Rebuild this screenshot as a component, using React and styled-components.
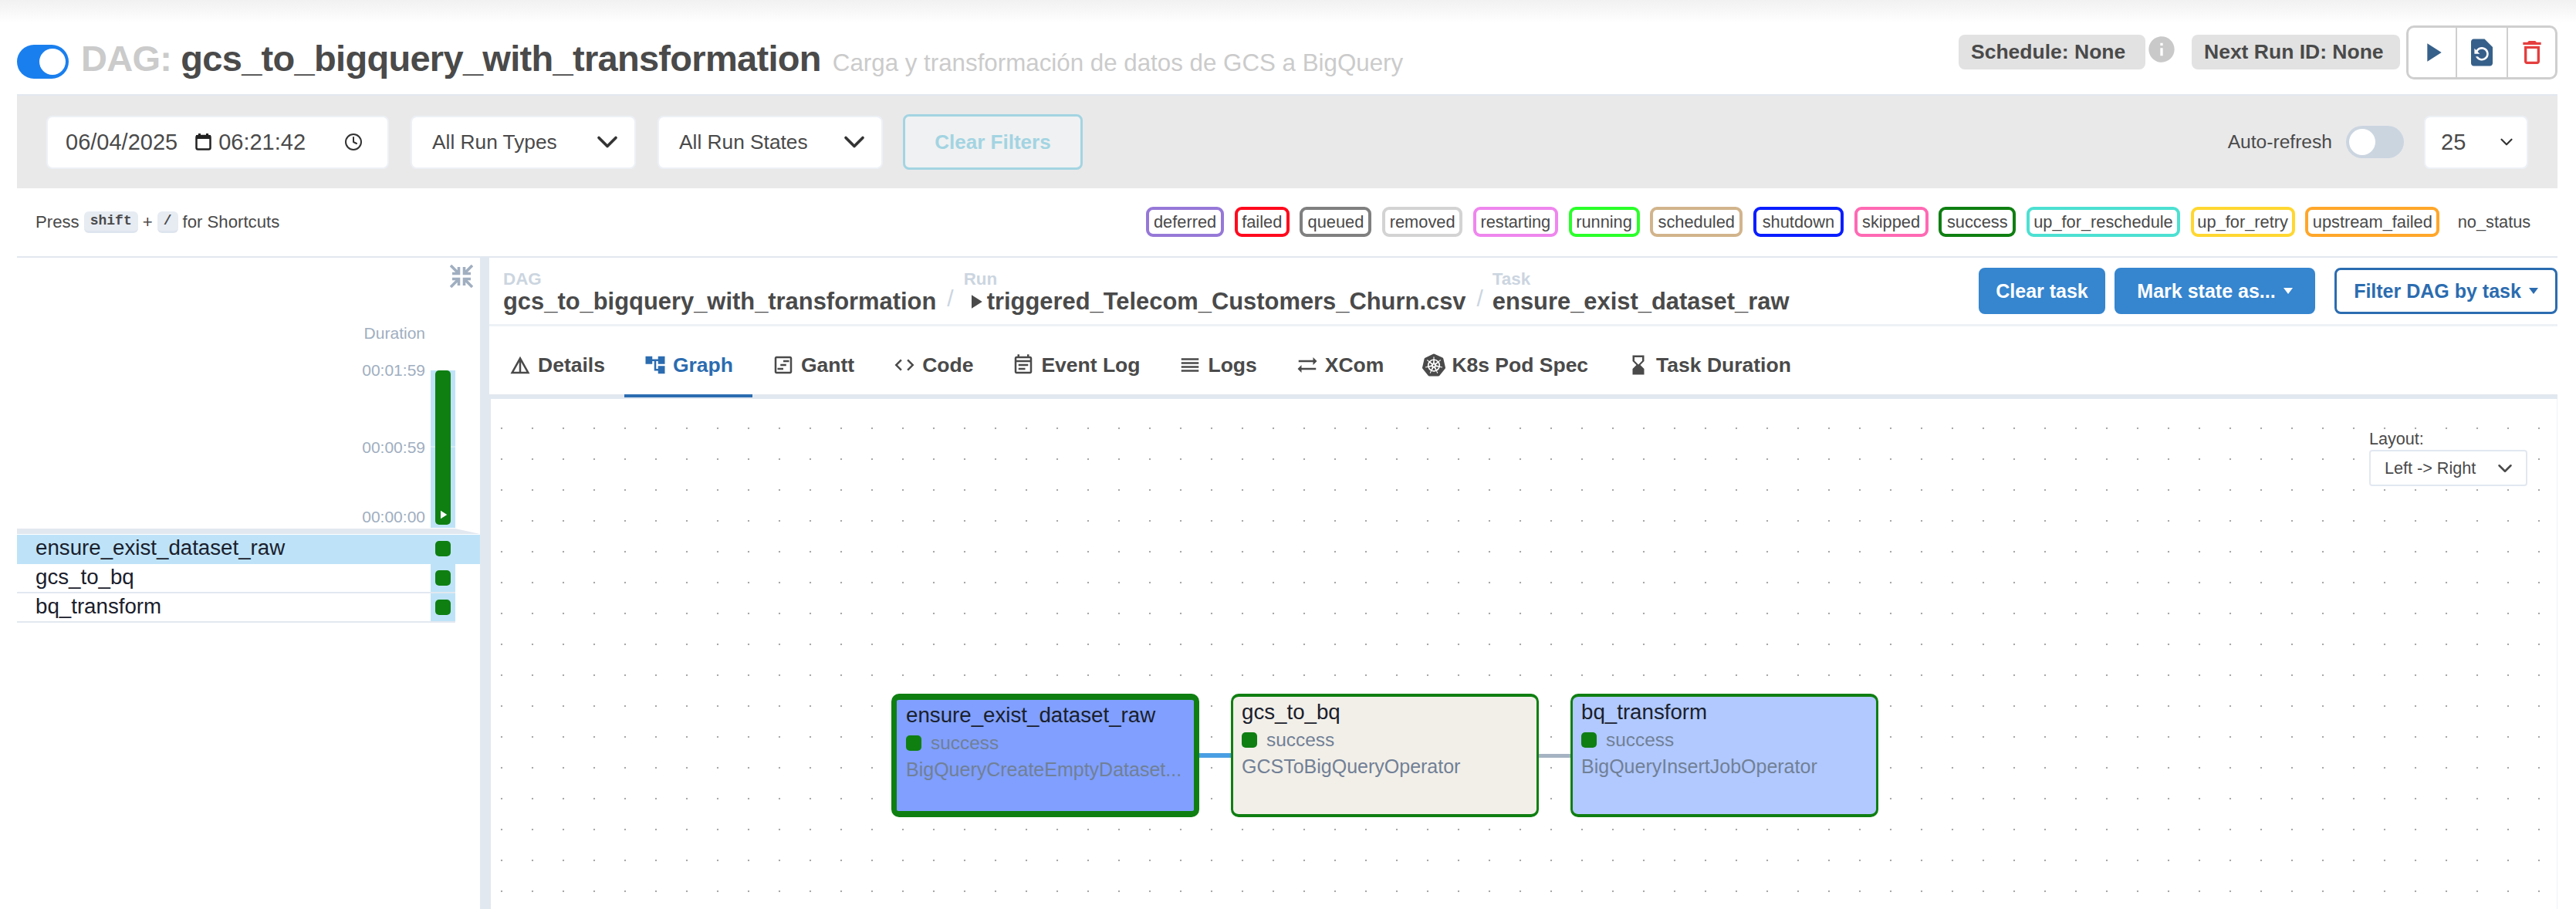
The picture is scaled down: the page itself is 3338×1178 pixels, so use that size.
import React from "react";
import styled, { createGlobalStyle } from "styled-components";
import {
  MdAccountTree,
  MdCode,
  MdDetails,
  MdHourglassBottom,
  MdInfo,
  MdOutlineDelete,
  MdOutlineEventNote,
  MdOutlineViewTimeline,
  MdPlayArrow,
  MdReorder,
  MdRestorePage,
  MdSyncAlt,
} from "react-icons/md";
import { SiKubernetes } from "react-icons/si";
import { FiChevronDown, FiClock } from "react-icons/fi";

const GlobalStyle = createGlobalStyle`
  html, body {
    margin: 0;
    height: 1178px;
    overflow: hidden;
    background: #fff;
    font-family: "Liberation Sans", Arial, sans-serif;
    color: #4a4a4a;
  }
`;

const Page = styled.div`
  height: 1178px;
  box-sizing: border-box;
  padding: 33px 24px 0 22px;
  display: flex;
  flex-direction: column;
  background: linear-gradient(#f1f1f1, #fff 30px);
`;

/* header */
const Header = styled.header`
  height: 70px;
  display: flex;
  align-items: flex-start;
  justify-content: space-between;
`;

const TitleGroup = styled.div`
  display: flex;
  align-items: center;
  height: 70px;
`;

const Switch = styled.div`
  box-sizing: border-box;
  flex: none;
  display: flex;
  align-items: center;
  justify-content: ${(p) => (p.$on ? "flex-end" : "flex-start")};
  width: ${(p) => (p.$on ? "67px" : "75px")};
  height: ${(p) => (p.$on ? "44px" : "42px")};
  margin-top: ${(p) => (p.$on ? "24px" : "0")};
  padding: 0 4px;
  border-radius: 22px;
  background: ${(p) => (p.$on ? "#1a7fee" : "#cbd5e0")};
  span {
    width: 34px;
    height: 34px;
    border-radius: 50%;
    background: #fff;
  }
`;

const Title = styled.h1`
  margin: 15px 0 0 16px;
  font-size: 47px;
  line-height: 56px;
  font-weight: 700;
  letter-spacing: -0.7px;
  white-space: nowrap;
  span {
    color: #cbcbcb;
    margin-right: 12px;
  }
`;

const Description = styled.span`
  margin: 27px 0 0 15px;
  font-size: 31.3px;
  color: #cbcbcb;
  white-space: nowrap;
`;

const HeaderRight = styled.div`
  display: flex;
  align-items: flex-start;
`;

const Badge = styled.div`
  box-sizing: border-box;
  width: ${(p) => p.$w}px;
  height: 45px;
  margin-top: 12px;
  padding-left: 16px;
  display: flex;
  align-items: center;
  border-radius: 8px;
  background: #e2e2e2;
  font-size: 26.5px;
  font-weight: 700;
  white-space: nowrap;
`;

const InfoMark = styled.div`
  width: 60px;
  height: 70px;
  display: flex;
  padding: 11px 0 0 1px;
  box-sizing: border-box;
  color: #c9c9c9;
  font-size: 40px;
`;

const ActionGroup = styled.div`
  display: flex;
  height: 70px;
  box-sizing: border-box;
  margin-left: 8px;
  border: 3px solid #cfcfcf;
  border-radius: 10px;
`;

const ActionButton = styled.div`
  display: flex;
  align-items: center;
  justify-content: center;
  width: ${(p) => p.$w}px;
  font-size: ${(p) => p.$size || 38}px;
  color: ${(p) => p.$color};
  & + & {
    border-left: 2px solid #cfcfcf;
  }
`;

/* filter bar */
const FilterBar = styled.section`
  margin-top: 19px;
  height: 122px;
  box-sizing: border-box;
  border-top: 2px solid #e2e8f0;
  background: #e9e9ea;
  display: flex;
  align-items: center;
  padding: 0 38px;
  gap: 28px;
`;

const Control = styled.div`
  box-sizing: border-box;
  width: ${(p) => p.$w}px;
  height: 69px;
  padding: 0 ${(p) => p.$pr || 28}px 0 ${(p) => p.$pl || 26}px;
  display: flex;
  align-items: center;
  justify-content: space-between;
  border: 2px solid #edf1f6;
  border-radius: 8px;
  background: #fff;
  font-size: 26.3px;
  white-space: nowrap;
  svg {
    flex: none;
    color: #333;
  }
`;

const DateControl = styled(Control)`
  justify-content: flex-start;
`;

const DateText = styled.span`
  font-size: 29px;
  margin-left: ${(p) => p.$ml || 0}px;
`;

const CalendarGlyph = styled.svg`
  width: 21px;
  height: 22px;
  margin-left: 23px;
`;

const ClockGlyph = styled(FiClock)`
  margin-left: auto;
`;

const ClearFilters = styled.div`
  box-sizing: border-box;
  width: 233px;
  height: 72px;
  display: flex;
  align-items: center;
  justify-content: center;
  margin-left: -2px;
  border: 3px solid #a3d4e2;
  border-radius: 8px;
  background: #f0f1f2;
  color: #a3d4e2;
  font-size: 26px;
  font-weight: 700;
`;

const RefreshGroup = styled.div`
  margin-left: auto;
  display: flex;
  align-items: center;
  gap: 18px;
  font-size: 24.6px;
`;

const PageSize = styled(Control)`
  margin-left: 8px;
  font-size: 29px;
`;

/* legend row */
const LegendRow = styled.div`
  height: 88px;
  flex: none;
  box-sizing: border-box;
  padding: 24px 25px 0 24px;
  display: flex;
  align-items: flex-start;
  justify-content: space-between;
`;

const Shortcuts = styled.div`
  display: flex;
  align-items: center;
  gap: 6px;
  height: 39px;
  font-size: 22.2px;
  kbd {
    font-family: "Liberation Mono", monospace;
    font-weight: 700;
    font-size: 18px;
    padding: 0 8px;
    height: 25px;
    line-height: 24px;
    border-radius: 6px;
    background: #e7ecf3;
    border-bottom: 3px solid #dfe5ee;
  }
`;

const LegendList = styled.div`
  display: flex;
  gap: 13.7px;
`;

const LegendItem = styled.div`
  box-sizing: border-box;
  width: ${(p) => p.$w}px;
  height: 39px;
  display: flex;
  align-items: center;
  justify-content: center;
  border: 4px solid ${(p) => p.$color};
  border-radius: 9px;
  font-size: 21.8px;
  white-space: nowrap;
`;

/* main split */
const Main = styled.main`
  flex: 1;
  min-height: 0;
  display: flex;
`;

const GridPanel = styled.aside`
  width: 600px;
  flex: none;
  box-sizing: border-box;
  border-top: 2px solid #e2e8f0;
`;

const Divider = styled.div`
  width: 12px;
  flex: none;
  background: #e2e8f0;
`;

const ChartHead = styled.div`
  height: 351px;
  width: 568px;
  display: flex;
  flex-direction: column;
  align-items: flex-end;
  position: relative;
`;

const CollapseIcon = styled.svg`
  position: absolute;
  top: 9px;
  left: 561px;
  width: 30px;
  height: 30px;
  fill: none;
  stroke: #a0aec0;
  stroke-width: 3.6;
`;

const DurationLabel = styled.div`
  margin: 85px 39px 0 0;
  height: 26px;
  line-height: 26px;
  font-size: 21px;
  color: #a0aec0;
`;

const DurationChart = styled.div`
  margin-top: 35px;
  display: flex;
  gap: 7px;
  align-items: flex-start;
`;

const Axis = styled.div`
  display: flex;
  flex-direction: column;
  align-items: flex-end;
  margin-top: -13px;
`;

const AxisTick = styled.div`
  height: 26px;
  line-height: 26px;
  margin-top: ${(p) => p.$gap || 0}px;
  font-size: 21px;
  color: #a0aec0;
`;

const BarCell = styled.div`
  width: 32px;
  height: 204px;
  flex: none;
  background: linear-gradient(#bee3f8 0 98px, #d4ecfa 98px 100px, #bee3f8 100px);
`;

const DurationBar = styled.div`
  width: 20px;
  height: 200px;
  margin-left: 6px;
  border-radius: 5px;
  background: #0f7f12;
  display: flex;
  align-items: flex-end;
  justify-content: center;
  svg {
    color: #fff;
    margin-bottom: 4px;
  }
`;

const Wedge = styled.div`
  height: 7px;
  margin-bottom: 1px;
  background: #e2e8f0;
  clip-path: polygon(0 0, 568px 0, 100% 100%, 0 100%);
`;

const TaskRow = styled.div`
  box-sizing: border-box;
  display: flex;
  height: 38px;
  width: ${(p) => (p.$selected ? "600px" : "568px")};
  padding-right: ${(p) => (p.$selected ? "32px" : "0")};
  background: ${(p) => (p.$selected ? "#bee3f8" : "transparent")};
  border-bottom: 2px solid ${(p) => (p.$selected ? "#bee3f8" : "#e2e8f0")};
`;

const TaskName = styled.div`
  flex: 1;
  padding-left: 24px;
  line-height: 34px;
  font-size: 27.7px;
  color: #1a202c;
`;

const TaskCell = styled.div`
  width: 32px;
  display: flex;
  align-items: center;
  justify-content: center;
  background: #bee3f8;
`;

const StatusSquare = styled.span`
  display: block;
  flex: none;
  width: 20px;
  height: 20px;
  border-radius: 5px;
  background: #0f7f12;
`;

/* details panel */
const DetailPanel = styled.section`
  flex: 1;
  min-width: 0;
  display: flex;
  flex-direction: column;
  border-top: 2px solid #e2e8f0;
`;

const CrumbBar = styled.div`
  height: 89px;
  flex: none;
  box-sizing: border-box;
  border-bottom: 3px solid #edf2f7;
  display: flex;
  justify-content: space-between;
  padding-left: 18px;
`;

const Crumbs = styled.div`
  display: flex;
  align-items: flex-start;
`;

const Crumb = styled.div`
  padding-top: 16px;
  small {
    display: block;
    height: 24px;
    line-height: 24px;
    font-size: 22.4px;
    font-weight: 700;
    color: #cbd5e0;
  }
  div {
    display: flex;
    align-items: center;
    height: 34px;
    font-size: 30.9px;
    font-weight: 700;
    white-space: nowrap;
  }
`;

const CrumbSep = styled.span`
  padding-top: 36px;
  margin: 0 ${(p) => p.$after}px 0 ${(p) => p.$before}px;
  font-size: 30px;
  color: #cbd5e0;
`;

const CrumbActions = styled.div`
  display: flex;
  align-items: flex-start;
  padding-top: 13px;
`;

const ActionPill = styled.div`
  box-sizing: border-box;
  width: ${(p) => p.$w}px;
  height: 60px;
  margin-left: ${(p) => p.$ml}px;
  display: flex;
  align-items: center;
  justify-content: center;
  gap: 10px;
  border-radius: 8px;
  border: 3px solid ${(p) => (p.$outline ? "#2b6cb0" : "#3585cf")};
  background: ${(p) => (p.$outline ? "#fff" : "#3585cf")};
  color: ${(p) => (p.$outline ? "#2b6cb0" : "#fff")};
  font-size: 25px;
  font-weight: 700;
  white-space: nowrap;
  i {
    border-left: 6px solid transparent;
    border-right: 6px solid transparent;
    border-top: 8px solid currentColor;
  }
`;

const TabBar = styled.nav`
  height: 94px;
  flex: none;
  box-sizing: border-box;
  border-bottom: 6px solid #e2e8f0;
  display: flex;
`;

const Tab = styled.div`
  height: 92px;
  box-sizing: border-box;
  padding: 12px 25px 0;
  display: flex;
  align-items: center;
  gap: 8px;
  font-size: 26.5px;
  font-weight: 700;
  white-space: nowrap;
  color: ${(p) => (p.$active ? "#2b6cb0" : "#4a4a4a")};
  border-bottom: 4px solid ${(p) => (p.$active ? "#2b6cb0" : "transparent")};
  svg {
    font-size: 30px;
  }
`;

const GraphArea = styled.div`
  flex: 1;
  position: relative;
  overflow: hidden;
  border-left: 2px solid #e2e8f0;
  border-right: 1px solid #edf2f7;
  background-color: #fff;
  background-image: radial-gradient(circle at center, #a8a8a8 1px, transparent 1.6px);
  background-size: 40px 40px;
  background-position: -6px 18px;
`;

const LayoutControl = styled.div`
  position: absolute;
  top: 40px;
  left: 2434px;
  font-size: 21.6px;
  label {
    display: block;
    height: 26px;
    line-height: 24px;
  }
`;

const LayoutSelect = styled.div`
  box-sizing: border-box;
  width: 205px;
  height: 47px;
  padding: 0 12px 0 18px;
  display: flex;
  align-items: center;
  justify-content: space-between;
  border: 2px solid #e2e8f0;
  border-radius: 4px;
  background: #fff;
`;

const TaskNode = styled.div`
  position: absolute;
  top: 382px;
  left: ${(p) => p.$x}px;
  width: 399px;
  height: 160px;
  box-sizing: border-box;
  padding: ${(p) => (p.$selected ? "2px 12px" : "2px 11px")};
  border-style: solid;
  border-color: #0f7f12;
  border-width: ${(p) => (p.$selected ? "8px 7px" : "4px 3px")};
  border-radius: 10px;
  background: ${(p) => p.$fill};
`;

const NodeName = styled.div`
  height: 36px;
  line-height: 36px;
  font-size: 27.7px;
  color: #1a202c;
`;

const NodeStatus = styled.div`
  margin-top: 2px;
  height: 32px;
  display: flex;
  align-items: center;
  gap: 12px;
  font-size: 24.4px;
  color: #718096;
`;

const NodeOperator = styled.div`
  line-height: 36px;
  font-size: 25px;
  color: #718096;
  white-space: nowrap;
`;

const Edge = styled.div`
  position: absolute;
  top: ${(p) => (p.$active ? 459 : 460)}px;
  left: ${(p) => p.$x}px;
  width: 42px;
  height: ${(p) => (p.$active ? 6 : 5)}px;
  background: ${(p) => (p.$active ? "#4a9fe3" : "#a5b3c2")};
`;

const legend = [
  ["deferred", "#9678d8", 101],
  ["failed", "#ff0a1e", 71],
  ["queued", "#808080", 93],
  ["removed", "#d3d3d3", 104],
  ["restarting", "#ef86ee", 110],
  ["running", "#2aff2a", 92],
  ["scheduled", "#d2b48c", 120],
  ["shutdown", "#0a1eff", 117],
  ["skipped", "#ff69b4", 96],
  ["success", "#0f7f12", 100],
  ["up_for_reschedule", "#4ce0d2", 199],
  ["up_for_retry", "#ffd730", 135],
  ["upstream_failed", "#ffa62a", 174],
  ["no_status", "transparent", 114],
];

const tabs = [
  ["Details", MdDetails],
  ["Graph", MdAccountTree],
  ["Gantt", MdOutlineViewTimeline],
  ["Code", MdCode],
  ["Event Log", MdOutlineEventNote],
  ["Logs", MdReorder],
  ["XCom", MdSyncAlt],
  ["K8s Pod Spec", SiKubernetes],
  ["Task Duration", MdHourglassBottom],
];

const tasks = ["ensure_exist_dataset_raw", "gcs_to_bq", "bq_transform"];

const nodes = [
  { x: 519, name: "ensure_exist_dataset_raw", fill: "#809fff", op: "BigQueryCreateEmptyDataset...", selected: true },
  { x: 959, name: "gcs_to_bq", fill: "#f2efe8", op: "GCSToBigQueryOperator" },
  { x: 1399, name: "bq_transform", fill: "#b1c9ff", op: "BigQueryInsertJobOperator" },
];

const App = () => (
  <Page>
    <GlobalStyle />
    <Header>
      <TitleGroup>
        <Switch $on>
          <span />
        </Switch>
        <Title>
          <span>DAG:</span>gcs_to_bigquery_with_transformation
        </Title>
        <Description>Carga y transformación de datos de GCS a BigQuery</Description>
      </TitleGroup>
      <HeaderRight>
        <Badge $w={242}>Schedule: None</Badge>
        <InfoMark>
          <MdInfo />
        </InfoMark>
        <Badge $w={270}>Next Run ID: None</Badge>
        <ActionGroup>
          <ActionButton $w={61} $size={40} $color="#36608a">
            <MdPlayArrow />
          </ActionButton>
          <ActionButton $w={64} $size={42} $color="#36608a">
            <MdRestorePage />
          </ActionButton>
          <ActionButton $w={61} $size={40} $color="#e53e3e">
            <MdOutlineDelete />
          </ActionButton>
        </ActionGroup>
      </HeaderRight>
    </Header>

    <FilterBar>
      <DateControl $w={444} $pr={32} $pl={23}>
        <DateText>06/04/2025</DateText>
        <CalendarGlyph viewBox="0 0 21 22">
          <rect x="1.5" y="3" width="18" height="17.5" rx="2" fill="none" stroke="#222" strokeWidth="2.5" />
          <rect x="1" y="2" width="19" height="5" fill="#222" />
          <rect x="4" y="0" width="3" height="4" fill="#222" />
          <rect x="14" y="0" width="3" height="4" fill="#222" />
        </CalendarGlyph>
        <DateText $ml={9}>06:21:42</DateText>
        <ClockGlyph size={24} />
      </DateControl>
      <Control $w={292} $pr={13}>
        All Run Types
        <FiChevronDown size={44} strokeWidth={2} />
      </Control>
      <Control $w={292} $pr={13}>
        All Run States
        <FiChevronDown size={44} strokeWidth={2} />
      </Control>
      <ClearFilters>Clear Filters</ClearFilters>
      <RefreshGroup>
        Auto-refresh
        <Switch>
          <span />
        </Switch>
        <PageSize $w={135} $pr={13} $pl={20}>
          25
          <FiChevronDown size={26} strokeWidth={2} />
        </PageSize>
      </RefreshGroup>
    </FilterBar>

    <LegendRow>
      <Shortcuts>
        Press <kbd>shift</kbd> + <kbd>/</kbd> for Shortcuts
      </Shortcuts>
      <LegendList>
        {legend.map(([name, color, width]) => (
          <LegendItem key={name} $color={color} $w={width}>
            {name}
          </LegendItem>
        ))}
      </LegendList>
    </LegendRow>

    <Main>
      <GridPanel>
        <ChartHead>
          <CollapseIcon viewBox="0 0 30 30">
            <path d="M1 1l10 10M3 11.5h8.5V3" />
            <path d="M29 1L19 11M27 11.5h-8.5V3" />
            <path d="M1 29l10-10M3 18.5h8.5V27" />
            <path d="M29 29L19 19M27 18.5h-8.5V27" />
          </CollapseIcon>
          <DurationLabel>Duration</DurationLabel>
          <DurationChart>
            <Axis>
              <AxisTick>00:01:59</AxisTick>
              <AxisTick $gap={74}>00:00:59</AxisTick>
              <AxisTick $gap={64}>00:00:00</AxisTick>
            </Axis>
            <BarCell>
              <DurationBar>
                <MdPlayArrow size={18} />
              </DurationBar>
            </BarCell>
          </DurationChart>
        </ChartHead>
        <Wedge />
        {tasks.map((name, i) => (
          <TaskRow key={name} $selected={i === 0}>
            <TaskName>{name}</TaskName>
            <TaskCell>
              <StatusSquare />
            </TaskCell>
          </TaskRow>
        ))}
      </GridPanel>
      <Divider />
      <DetailPanel>
        <CrumbBar>
          <Crumbs>
            <Crumb>
              <small>DAG</small>
              <div>gcs_to_bigquery_with_transformation</div>
            </Crumb>
            <CrumbSep $before={14} $after={13}>/</CrumbSep>
            <Crumb>
              <small>Run</small>
              <div>
                <MdPlayArrow size={30} />
                triggered_Telecom_Customers_Churn.csv
              </div>
            </Crumb>
            <CrumbSep $before={14} $after={12}>/</CrumbSep>
            <Crumb>
              <small>Task</small>
              <div>ensure_exist_dataset_raw</div>
            </Crumb>
          </Crumbs>
          <CrumbActions>
            <ActionPill $w={164}>Clear task</ActionPill>
            <ActionPill $w={260} $ml={12}>
              Mark state as... <i />
            </ActionPill>
            <ActionPill $w={289} $ml={25} $outline>
              Filter DAG by task <i />
            </ActionPill>
          </CrumbActions>
        </CrumbBar>
        <TabBar>
          {tabs.map(([label, Icon]) => (
            <Tab key={label} $active={label === "Graph"}>
              <Icon />
              {label}
            </Tab>
          ))}
        </TabBar>
        <GraphArea>
          <LayoutControl>
            <label>Layout:</label>
            <LayoutSelect>
              Left -&gt; Right
              <FiChevronDown size={30} strokeWidth={2} />
            </LayoutSelect>
          </LayoutControl>
          <Edge $x={918} $active />
          <Edge $x={1357} />
          {nodes.map((node) => (
            <TaskNode key={node.name} $x={node.x} $fill={node.fill} $selected={node.selected}>
              <NodeName>{node.name}</NodeName>
              <NodeStatus>
                <StatusSquare />
                success
              </NodeStatus>
              <NodeOperator>{node.op}</NodeOperator>
            </TaskNode>
          ))}
        </GraphArea>
      </DetailPanel>
    </Main>
  </Page>
);

export default App;
